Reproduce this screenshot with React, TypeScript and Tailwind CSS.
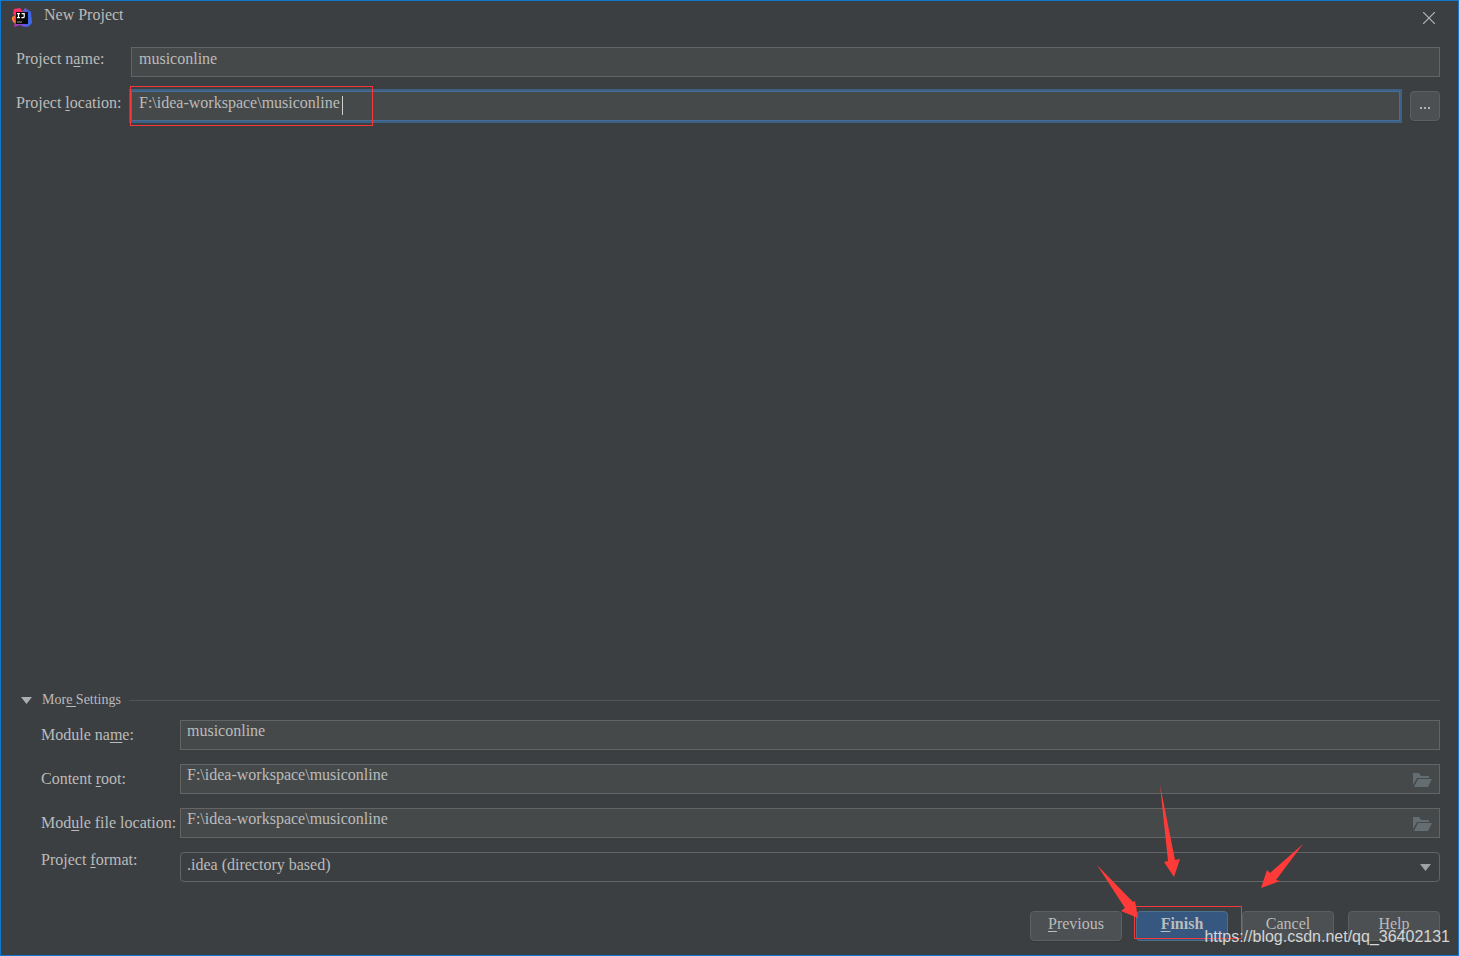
import type { ReactNode } from 'react';

const field =
  'block h-[30px] w-full min-w-0 border border-[#646464] bg-[#45494a] text-base text-[#bbbbbb] outline-none';

function Key({ children }: { children: ReactNode }) {
  return <span className="underline decoration-1 underline-offset-2">{children}</span>;
}

function IdeaLogo() {
  return (
    <svg width="20" height="20" viewBox="0 0 20 20" aria-hidden="true">
      <defs>
        <linearGradient id="pink" x1="0" y1="0" x2="1" y2="1">
          <stop offset="0" stopColor="#ff2d6b" />
          <stop offset="1" stopColor="#fe315d" />
        </linearGradient>
        <linearGradient id="blue" x1="0" y1="0" x2="1" y2="1">
          <stop offset="0" stopColor="#9a4bb0" />
          <stop offset="0.4" stopColor="#3d62e0" />
          <stop offset="1" stopColor="#3c6cf0" />
        </linearGradient>
        <linearGradient id="violet" x1="0" y1="0" x2="1" y2="0">
          <stop offset="0" stopColor="#b530b8" />
          <stop offset="1" stopColor="#5a5cf0" />
        </linearGradient>
      </defs>
      <path d="M0 9 4 7 5 16 2 15 0 12Z" fill="#f5852a" />
      <path d="M2 1 8 0 11 4 5 15 2 12 3 8 1 6Z" fill="url(#pink)" />
      <path d="M10 4 13 0 19 4 20 15 16 19 10 17Z" fill="url(#blue)" />
      <path d="M3 14 10 15 16 18 12 19 8 17 2 19Z" fill="url(#violet)" />
      <rect x="4" y="4" width="12" height="12" fill="#080808" />
      <path
        d="M5 5.600h3M6.500 5.600v4M5 9.600h3M9.600 5.600h2.600v2.800q0 1.300-1.300 1.300h-1.500"
        fill="none"
        stroke="#fff"
        strokeWidth="1.2"
      />
      <path d="M5 14h5" stroke="#9a9a9a" strokeWidth="1" />
    </svg>
  );
}

function FolderIcon() {
  return (
    <svg width="19" height="14" viewBox="0 0 19 14" fill="#646d71" aria-hidden="true">
      <path d="M0 0h6l2 3h8v2H4L0 12Z" />
      <path d="M5 6h14l-4 8H1Z" />
    </svg>
  );
}

function PathField({ id }: { id: string }) {
  return (
    <div className="flex items-center">
      <input id={id} className={`${field} pb-2 pl-1.5`} defaultValue={'F:\\idea-workspace\\musiconline'} />
      <button type="button" aria-label="Browse" className="z-10 -ml-[27px] mt-0.5 flex w-[27px] shrink-0">
        <FolderIcon />
      </button>
    </div>
  );
}

function DialogButton({ children }: { children: ReactNode }) {
  return (
    <button
      type="button"
      className="h-[30px] w-[92px] rounded border border-[#5e6060] bg-[#4c5052] pb-1 leading-6 shadow-[0_1px_0_#363839]"
    >
      {children}
    </button>
  );
}

function Arrows() {
  return (
    <svg
      className="pointer-events-none absolute -left-10 -top-[126px] z-10"
      width="210"
      height="136"
      viewBox="0 0 210 136"
      fill="#ff3b39"
      aria-hidden="true"
    >
      <path d="M64 0 68 20 79 75 84 74 78 92 68 77 72 76Z" />
      <path d="M1 80 37 117 39 116 42 133 25 126 29 123Z" />
      <path d="M207 59 180 95 184 96 165 103 171 85 174 88Z" />
    </svg>
  );
}

export default function App() {
  return (
    <main className="flex min-h-screen flex-col border border-[#0f78d0] bg-[#3c3f41] font-['Liberation_Serif',serif] text-base leading-6 text-[#bbbbbb]">
      <header className="flex h-[46px] items-start justify-between pl-[11px] pr-[23px]">
        <div className="flex items-start gap-3">
          <div className="pt-[7px]">
            <IdeaLogo />
          </div>
          <h1 className="pt-0.5">New Project</h1>
        </div>
        <button type="button" aria-label="Close" className="mt-[11px]">
          <svg width="12" height="12" viewBox="0 0 12 12" stroke="#b4b6b7" strokeWidth="1.2" aria-hidden="true">
            <path d="M0 0 12 12M12 0 0 12" />
          </svg>
        </button>
      </header>

      <section className="grid grid-cols-[115px_1fr] gap-y-3.5 pl-[15px] pr-[18px]">
        <label htmlFor="project-name">
          Project n<Key>a</Key>me:
        </label>
        <input id="project-name" className={`${field} pb-1.5 pl-[7px]`} defaultValue="musiconline" />
        <label htmlFor="project-location">
          Project <Key>l</Key>ocation:
        </label>
        <div className="flex gap-2.5">
          <div className="relative min-w-0 flex-1">
            <input
              id="project-location"
              className="block h-[30px] w-full border border-[#466d94] bg-[#45494a] pb-1.5 pl-[7px] text-base text-[#bbbbbb] outline-none ring-2 ring-[#3d6185]"
              defaultValue={'F:\\idea-workspace\\musiconline'}
            />
            <div className="pointer-events-none absolute -left-px -top-[5px] h-10 w-[243px] border border-[#f5393a]">
              <span className="absolute left-[211px] top-[9px] h-[19px] w-px bg-[#d0d0d0]" />
            </div>
          </div>
          <button
            type="button"
            aria-label="Browse"
            className="flex h-[30px] w-[30px] items-center justify-center gap-0.5 rounded border border-[#5e6060] bg-[#4c5052] shadow-[0_1px_0_#363839]"
          >
            <span className="mt-1 size-0.5 bg-[#afb1b3]" />
            <span className="mt-1 size-0.5 bg-[#afb1b3]" />
            <span className="mt-1 size-0.5 bg-[#afb1b3]" />
          </button>
        </div>
      </section>

      <section className="mt-auto pl-5 pr-[18px]">
        <div className="flex items-center gap-2">
          <button type="button" aria-expanded="true" className="flex items-center gap-2.5 text-sm leading-6">
            <svg width="11" height="7" viewBox="0 0 11 7" fill="#adadad" aria-hidden="true">
              <path d="M0 0h11L5.500 7Z" />
            </svg>
            <span className="whitespace-pre">
              Mor<Key>e </Key>Settings
            </span>
          </button>
          <div className="h-px flex-1 bg-[#515354]" />
        </div>
        <div className="mt-2 grid grid-cols-[139px_1fr] items-center gap-y-3.5 pl-5">
          <label htmlFor="module-name">
            Module na<Key>m</Key>e:
          </label>
          <input id="module-name" className={`${field} pb-2 pl-1.5`} defaultValue="musiconline" />
          <label htmlFor="content-root">
            Content <Key>r</Key>oot:
          </label>
          <PathField id="content-root" />
          <label htmlFor="module-location">
            Mod<Key>u</Key>le file location:
          </label>
          <PathField id="module-location" />
          <label htmlFor="project-format" className="self-start leading-4">
            Project <Key>f</Key>ormat:
          </label>
          <div className="flex items-center">
            <select
              id="project-format"
              className="h-[30px] w-full appearance-none rounded border border-[#646464] bg-[#3c3f41] pb-1 pl-1.5 outline-none"
            >
              <option>.idea (directory based)</option>
            </select>
            <svg
              width="11"
              height="7"
              viewBox="0 0 11 7"
              fill="#9fa1a3"
              className="pointer-events-none z-10 -ml-5 mr-[9px] shrink-0"
              aria-hidden="true"
            >
              <path d="M0 0h11L5.500 7Z" />
            </svg>
          </div>
        </div>
      </section>

      <footer className="relative flex justify-end gap-3.5 pb-3.5 pr-[18px] pt-[29px]">
        <DialogButton>
          <Key>P</Key>revious
        </DialogButton>
        <div className="relative">
          <button
            type="button"
            className="h-[30px] w-[92px] rounded border border-[#4c708c] bg-[#365880] pb-1 font-bold leading-6"
          >
            <Key>F</Key>inish
          </button>
          <div className="pointer-events-none absolute -left-0.5 -top-[5px] h-[33px] w-[108px] border border-[#f5393a]" />
          <Arrows />
        </div>
        <DialogButton>Cancel</DialogButton>
        <DialogButton>Help</DialogButton>
        <p className="pointer-events-none absolute bottom-1.5 right-2 font-['Liberation_Sans',sans-serif] text-[#d4d5d5]">
          https://blog.csdn.net/qq_36402131
        </p>
      </footer>
    </main>
  );
}
